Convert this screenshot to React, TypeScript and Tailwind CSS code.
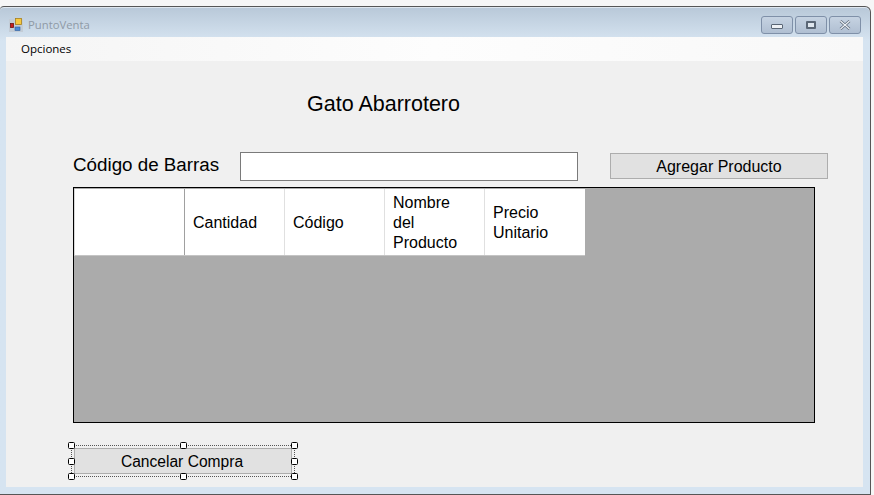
const columnas = [
  { titulo: "Cantidad", borde: "border-[#a0a0a0]" },
  { titulo: "Código", borde: "border-[#e0e0e0]" },
  { titulo: "Nombre del Producto", borde: "border-[#e0e0e0]" },
  { titulo: "Precio Unitario", borde: "border-[#e0e0e0]" },
];

const handles = [
  "left-[-4px] top-[-4px]",
  "left-[108px] top-[-4px]",
  "left-[219px] top-[-4px]",
  "left-[-4px] top-[12px]",
  "left-[219px] top-[12px]",
  "left-[-4px] top-[27px]",
  "left-[108px] top-[27px]",
  "left-[219px] top-[27px]",
];

const AppIcon = () => (
  <svg width="14" height="14" viewBox="0 0 14 14">
    <rect x="0" y="1" width="14" height="13" fill="#c3ccd6" />
    <rect x="1.5" y="5.5" width="3" height="4" fill="#c81e1e" stroke="#6e1212" strokeWidth="0.8" />
    <rect x="6.5" y="0.5" width="6" height="6" fill="#f6c83f" stroke="#a8801c" strokeWidth="0.8" />
    <rect x="6" y="9" width="5" height="3.5" fill="#4a8ad8" stroke="#2c5c9c" strokeWidth="0.6" />
  </svg>
);

const WinButton = ({ children }: { children: React.ReactNode }) => (
  <div className="w-[32px] h-[18px] flex items-center justify-center rounded-[3px] border border-[#7f90a8] bg-gradient-to-b from-[#c6d3e2] to-[#b0bfd2]">
    {children}
  </div>
);

const App = () => {
  return (
    <div className="w-[874px] h-[495px] bg-[#f6f6f6] pt-[6px] overflow-hidden font-['Liberation_Sans',sans-serif] text-black">
      <div className="w-[871px] h-[489px] flex flex-col rounded-tr-[6px] rounded-tl-[4px] border border-l-0 border-[#565656] bg-gradient-to-b from-[#b8c8d8] via-[#d6e4f1] via-[7%] to-[#d6e4f1] shadow-[inset_0_1px_0_#dfe7ef]">
        <div className="h-[30px] shrink-0 flex items-center pt-[6px] pl-[9px] pr-[9px]">
          <AppIcon />
          <span className="ml-[5px] text-[11.3px] text-[#8f9aa6] font-['Open_Sans',sans-serif]">PuntoVenta</span>
          <div className="ml-auto flex gap-[2px] items-center">
            <WinButton>
              <div className="w-[12px] h-[5px] mt-[3px] bg-[#eef1f5] border border-[#5a6675] rounded-[1px]" />
            </WinButton>
            <WinButton>
              <div className="w-[10px] h-[8px] bg-[#dfe6ee] border-2 border-[#5a6675] rounded-[1px]" />
            </WinButton>
            <WinButton>
              <svg width="12" height="10" viewBox="0 0 12 10">
                <path d="M1.5 1 L10.5 9 M10.5 1 L1.5 9" stroke="#5a6675" strokeWidth="2.6" />
                <path d="M1.5 1 L10.5 9 M10.5 1 L1.5 9" stroke="#eef2f6" strokeWidth="1.2" />
              </svg>
            </WinButton>
          </div>
        </div>

        <div className="ml-[6px] w-[857px] h-[450px] bg-[#f0f0f0] flex flex-col">
          <div className="h-[24px] shrink-0 bg-gradient-to-r from-[#f5f5f5] via-[#fdfdfd] to-[#f8f8f8] pl-[15px] flex items-center">
            <span className="text-[11.5px] font-['Open_Sans',sans-serif]">Opciones</span>
          </div>

          <div className="pl-[67px] flex flex-col">
            <h1 className="ml-[234px] mt-[31px] h-[24px] leading-[24px] text-[21.5px] whitespace-nowrap">Gato Abarrotero</h1>

            <div className="mt-[36px] h-[29px] flex items-center">
              <label className="w-[167px] text-[18.8px] leading-[22px] mb-[3px] whitespace-nowrap">Código de Barras</label>
              <input className="w-[338px] h-[29px] bg-white border border-[#7a7a7a] outline-none" />
              <button className="ml-[32px] w-[218px] h-[26px] mt-[-1px] pt-[1px] bg-[#e1e1e1] border border-[#adadad] text-[16px]">
                Agregar Producto
              </button>
            </div>

            <div className="mt-[6px] w-[742px] h-[236px] bg-[#ababab] border border-black pt-px">
              <div className="flex w-[511px] h-[67px] bg-white border-b border-[#c4c4c4] border-l border-l-[#d8d8d8]">
                <div className="w-[109px] shrink-0" />
                {columnas.map((c) => (
                  <div key={c.titulo} className={`w-[100px] shrink-0 flex items-center pt-[1px] pl-[8px] pr-[16px] border-l ${c.borde} text-[16px] leading-[20px]`}>
                    {c.titulo}
                  </div>
                ))}
              </div>
            </div>

            <div className="relative mt-[22px] ml-[-2px] w-[224px] h-[32px] border border-dotted border-[#555] p-[2px]">
              <button className="block w-[218px] h-[26px] pt-[1px] pr-[2px] bg-[#e1e1e1] border border-[#adadad] text-[15.6px]">
                Cancelar Compra
              </button>
              {handles.map((h) => (
                <div key={h} className={`absolute ${h} w-[7px] h-[7px] bg-white border border-black rounded-[1.5px]`} />
              ))}
            </div>
          </div>
        </div>
      </div>
    </div>
  );
};

export default App;
